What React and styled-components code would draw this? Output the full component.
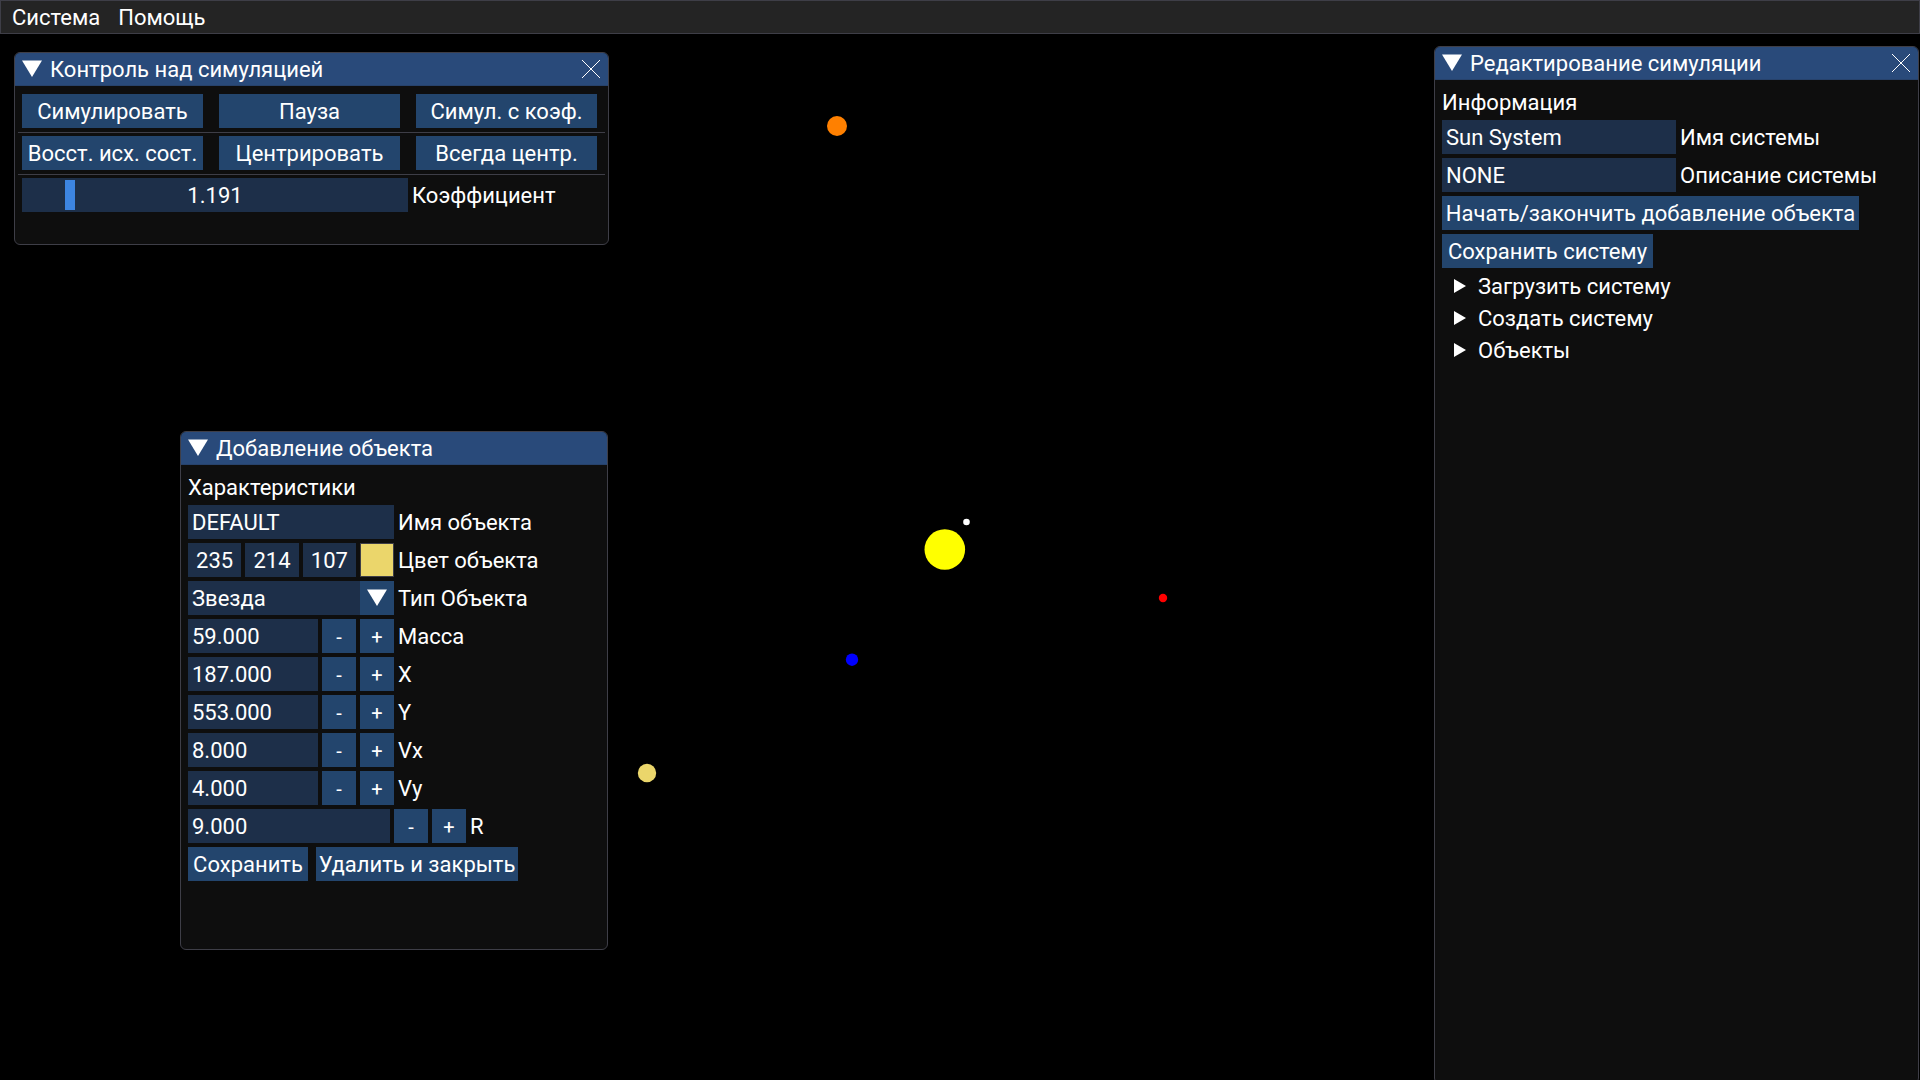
import React, { useId, useState } from "react";
import styled, { createGlobalStyle } from "styled-components";

const color = {
  text: "#ffffff",
  window: "#0e0e0e",
  title: "#294a7a",
  titleEdge: "#27426b",
  border: "#3e3e47",
  menu: "#242424",
  frame: "#1d2f49",
  button: "#23456d",
  buttonHover: "#4296fa",
  grab: "#3d85e0",
};

const GlobalStyle = createGlobalStyle`
  *, *::before, *::after { box-sizing: border-box; }
  html, body { margin: 0; background: #000; }
  body, button, input, select {
    font-family: Roboto, "Liberation Sans", sans-serif;
    font-size: 22px;
    line-height: 28px;
    color: ${color.text};
  }
`;

const Page = styled.div`
  display: flex;
  flex-direction: column;
  height: 100vh;
  overflow: hidden;
`;

const MenuBar = styled.nav`
  display: flex;
  flex: none;
  gap: 18px;
  height: 34px;
  padding: 0 11px;
  background: ${color.menu};
  border: 1px solid ${color.border};
`;

const MenuItem = styled.button`
  padding: 2px 0 0;
  background: none;
  border: 0;
`;

const Desktop = styled.main`
  position: relative;
  flex: 1;
  min-height: 0;
`;

const Space = styled.svg`
  display: block;
  width: 100%;
  height: 100%;
`;

const WindowFrame = styled.section`
  position: absolute;
  top: ${(p) => p.$top}px;
  left: ${(p) => (p.$left === undefined ? "auto" : `${p.$left}px`)};
  right: ${(p) => (p.$right === undefined ? "auto" : `${p.$right}px`)};
  bottom: ${(p) => (p.$bottom === undefined ? "auto" : `${p.$bottom}px`)};
  width: ${(p) => p.$width}px;
  background: ${color.window};
  border: 1px solid ${color.border};
  border-radius: 6px;
  overflow: hidden;
`;

const TitleBar = styled.header`
  display: flex;
  align-items: center;
  gap: 4px;
  height: 33px;
  padding: 0 3px;
  background: ${color.title};
  border-bottom: 1px solid ${color.titleEdge};
`;

const Title = styled.h2`
  flex: 1;
  margin: 0;
  padding-top: 2px;
  font-size: 22px;
  font-weight: 400;
  white-space: nowrap;
`;

const IconButton = styled.button`
  display: flex;
  padding: 0;
  background: none;
  border: 0;
`;

const Icon = styled.svg`
  display: block;
  width: 28px;
  height: 28px;
`;

const Body = styled.div`
  display: flex;
  flex-direction: column;
  gap: ${(p) => p.$gap ?? 4}px;
  padding: 8px 7px ${(p) => p.$space ?? 8}px;
`;

const ButtonGrid = styled.div`
  display: grid;
  grid-template-columns: repeat(3, 1fr);
  gap: 16px;
  padding-right: 4px;
`;

const Separator = styled.hr`
  align-self: stretch;
  height: 1px;
  margin: 4px -4px 3px;
  background: ${color.border};
  border: 0;
`;

const Row = styled.div`
  display: flex;
  align-items: center;
  gap: ${(p) => p.$gap ?? 4}px;
`;

const Button = styled.button`
  min-width: ${(p) => p.$width ?? 34}px;
  height: 34px;
  padding: 2px 2px 0;
  background: ${color.button};
  border: 0;
  white-space: nowrap;
  &:hover { background: ${color.buttonHover}; }
`;

const StepButton = styled(Button)`
  font-size: 20px;
`;

const Steps = styled.div`
  display: flex;
  gap: 4px;
`;

const TextField = styled.input`
  width: ${(p) => p.$width}px;
  height: 34px;
  padding: 0 4px;
  background: ${color.frame};
  border: 0;
  border-radius: 0;
  outline: 0;
  text-align: ${(p) => p.$align ?? "left"};
`;

const Label = styled.label`
  padding-top: 2px;
  white-space: nowrap;
`;

const Caption = styled.p`
  height: 28px;
  margin: 0;
  line-height: 30px;
`;

const FieldGroup = styled.div`
  display: flex;
  gap: 4px;
  width: 206px;
`;

const Channel = styled(TextField)`
  flex: 1;
  min-width: 0;
  padding: 0;
`;

const Swatch = styled.input`
  appearance: none;
  width: 34px;
  height: 34px;
  padding: 0;
  background: none;
  border: 1px solid ${color.border};
  &::-webkit-color-swatch-wrapper { padding: 0; }
  &::-webkit-color-swatch { border: 0; border-radius: 0; }
`;

const Combo = styled.div`
  display: grid;
  grid-template-columns: 1fr 34px;
  width: 206px;
  height: 34px;
`;

const Select = styled.select`
  grid-area: 1 / 1 / 2 / 3;
  appearance: none;
  padding: 2px 38px 0 4px;
  background: ${color.frame};
  border: 0;
  border-radius: 0;
  outline: 0;
`;

const ComboArrow = styled.span`
  grid-area: 1 / 2;
  display: grid;
  place-items: center;
  background: ${color.button};
  pointer-events: none;
`;

const SliderFrame = styled.div`
  display: grid;
  width: 386px;
  height: 34px;
  background: ${color.frame};
`;

const SliderInput = styled.input`
  grid-area: 1 / 1;
  appearance: none;
  width: auto;
  margin: 2px;
  background: transparent;
  outline: 0;
  &::-webkit-slider-runnable-track { height: 30px; }
  &::-webkit-slider-thumb {
    appearance: none;
    width: 10px;
    height: 30px;
    background: ${color.grab};
    border: 0;
    border-radius: 0;
  }
`;

const SliderValue = styled.output`
  grid-area: 1 / 1;
  place-self: center;
  padding-top: 2px;
  pointer-events: none;
`;

const TreeToggle = styled.button`
  display: flex;
  align-items: flex-start;
  gap: 8px;
  height: 28px;
  padding: 0;
  background: none;
  border: 0;
  line-height: 30px;
`;

const Start = styled.div`
  display: flex;
`;

function DownArrow() {
  return (
    <Icon viewBox="0 0 28 28" aria-hidden="true">
      <path d="M4 5.5H24L14 22Z" fill="#fff" />
    </Icon>
  );
}

function RightArrow() {
  return (
    <Icon viewBox="0 0 28 28" aria-hidden="true">
      <path d="M12 7V21L24 14Z" fill="#fff" />
    </Icon>
  );
}

function Window({ title, closable, children, ...place }) {
  const [open, setOpen] = useState(true);
  return (
    <WindowFrame {...place} aria-label={title}>
      <TitleBar>
        <IconButton aria-label="Свернуть" aria-expanded={open} onClick={() => setOpen(!open)}>
          <DownArrow />
        </IconButton>
        <Title>{title}</Title>
        {closable && (
          <IconButton aria-label="Закрыть">
            <Icon viewBox="0 0 28 28" aria-hidden="true">
              <path d="M5 5L23 23M23 5L5 23" stroke="#fff" strokeWidth="1" />
            </Icon>
          </IconButton>
        )}
      </TitleBar>
      {open && children}
    </WindowFrame>
  );
}

function TextRow({ label, value, width }) {
  const id = useId();
  return (
    <Row>
      <TextField id={id} type="text" defaultValue={value} $width={width} />
      <Label htmlFor={id}>{label}</Label>
    </Row>
  );
}

function NumberRow({ label, value, width = 130 }) {
  const id = useId();
  const [number, setNumber] = useState(value);
  const step = (by) => setNumber((Number(number) + by).toFixed(3));
  return (
    <Row>
      <TextField
        id={id}
        type="text"
        inputMode="decimal"
        value={number}
        onChange={(e) => setNumber(e.target.value)}
        $width={width}
      />
      <Steps>
        <StepButton onClick={() => step(-1)}>-</StepButton>
        <StepButton onClick={() => step(1)}>+</StepButton>
      </Steps>
      <Label htmlFor={id}>{label}</Label>
    </Row>
  );
}

const bodies = [
  { x: 837, y: 92, r: 10, fill: "#ff8000" },
  { x: 944.8, y: 515.5, r: 20.3, fill: "#ffff00" },
  { x: 966.5, y: 488, r: 3.3, fill: "#ffffff" },
  { x: 852, y: 625.7, r: 6.2, fill: "#0000ff" },
  { x: 1163, y: 564, r: 4.2, fill: "#ff0000" },
  { x: 647, y: 739, r: 9.2, fill: "#ebd66b" },
];

export default function App() {
  const [factor, setFactor] = useState(1.191);
  return (
    <Page>
      <GlobalStyle />
      <MenuBar>
        <MenuItem>Система</MenuItem>
        <MenuItem>Помощь</MenuItem>
      </MenuBar>
      <Desktop>
        <Space aria-hidden="true">
          {bodies.map((b) => (
            <circle key={b.fill} cx={b.x} cy={b.y} r={b.r} fill={b.fill} />
          ))}
        </Space>

        <Window title="Контроль над симуляцией" closable $top={18} $left={14} $width={595}>
          <Body $gap={0} $space={32}>
            <ButtonGrid>
              <Button>Симулировать</Button>
              <Button>Пауза</Button>
              <Button>Симул. с коэф.</Button>
            </ButtonGrid>
            <Separator />
            <ButtonGrid>
              <Button>Восст. исх. сост.</Button>
              <Button>Центрировать</Button>
              <Button>Всегда центр.</Button>
            </ButtonGrid>
            <Separator />
            <Row>
              <SliderFrame>
                <SliderInput
                  id="factor"
                  type="range"
                  min="0.1"
                  max="10"
                  step="0.001"
                  value={factor}
                  onChange={(e) => setFactor(Number(e.target.value))}
                />
                <SliderValue htmlFor="factor">{factor.toFixed(3)}</SliderValue>
              </SliderFrame>
              <Label htmlFor="factor">Коэффициент</Label>
            </Row>
          </Body>
        </Window>

        <Window title="Добавление объекта" $top={397} $left={180} $width={428}>
          <Body $space={68}>
            <Caption>Характеристики</Caption>
            <TextRow label="Имя объекта" value="DEFAULT" width={206} />
            <Row>
              <FieldGroup>
                <Channel aria-label="Красный" defaultValue="235" $align="center" />
                <Channel aria-label="Зелёный" defaultValue="214" $align="center" />
                <Channel aria-label="Синий" defaultValue="107" $align="center" />
                <Swatch id="color" type="color" defaultValue="#ebd66b" />
              </FieldGroup>
              <Label htmlFor="color">Цвет объекта</Label>
            </Row>
            <Row>
              <Combo>
                <Select id="kind" defaultValue="Звезда">
                  <option>Звезда</option>
                </Select>
                <ComboArrow>
                  <DownArrow />
                </ComboArrow>
              </Combo>
              <Label htmlFor="kind">Тип Объекта</Label>
            </Row>
            <NumberRow label="Масса" value="59.000" />
            <NumberRow label="X" value="187.000" />
            <NumberRow label="Y" value="553.000" />
            <NumberRow label="Vx" value="8.000" />
            <NumberRow label="Vy" value="4.000" />
            <NumberRow label="R" value="9.000" width={202} />
            <Row $gap={8}>
              <Button $width={120}>Сохранить</Button>
              <Button $width={202}>Удалить и закрыть</Button>
            </Row>
          </Body>
        </Window>

        <Window title="Редактирование симуляции" closable $top={12} $right={1} $bottom={-4} $width={485}>
          <Body>
            <Caption>Информация</Caption>
            <TextRow label="Имя системы" value="Sun System" width={234} />
            <TextRow label="Описание системы" value="NONE" width={234} />
            <Start>
              <Button $width={417}>Начать/закончить добавление объекта</Button>
            </Start>
            <Start>
              <Button $width={211}>Сохранить систему</Button>
            </Start>
            {["Загрузить систему", "Создать систему", "Объекты"].map((name) => (
              <TreeToggle key={name} aria-expanded="false">
                <RightArrow />
                {name}
              </TreeToggle>
            ))}
          </Body>
        </Window>
      </Desktop>
    </Page>
  );
}
